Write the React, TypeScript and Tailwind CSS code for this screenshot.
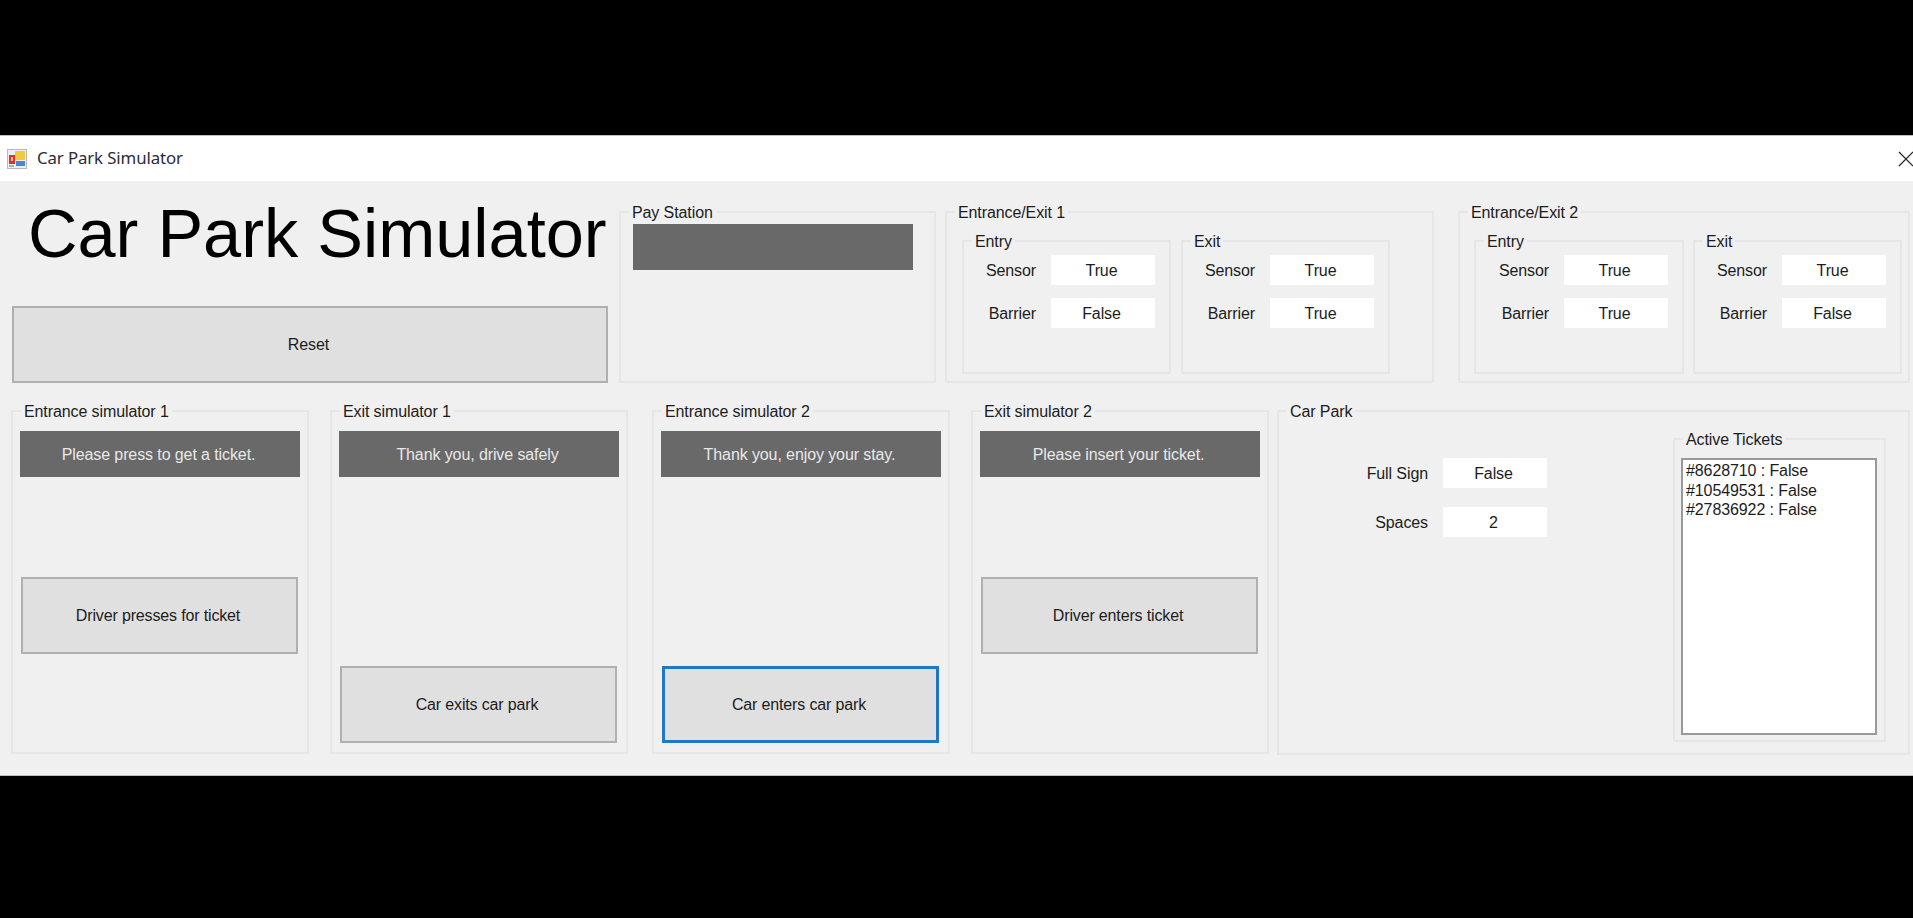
import { ReactNode } from "react";

function Group({
  label,
  className,
  children,
}: {
  label: string;
  className: string;
  children?: ReactNode;
}) {
  return (
    <div className={`border-2 border-[#e6e6e6] ${className}`}>
      <div className="-mt-[10px] ml-[8px] h-[20px] w-fit bg-[#f0f0f0] px-[3px] leading-[20px]">
        {label}
      </div>
      {children}
    </div>
  );
}

function Field({ label, value }: { label: string; value: string }) {
  return (
    <div className="flex items-center justify-end gap-[15px]">
      <span className="pt-[2px]">{label}</span>
      <span className="flex h-[30px] w-[104px] items-center justify-center bg-white pt-[2px] pr-[3px]">
        {value}
      </span>
    </div>
  );
}

function SensorBox({
  label,
  sensor,
  barrier,
  className,
}: {
  label: string;
  sensor: string;
  barrier: string;
  className: string;
}) {
  return (
    <Group label={label} className={`h-[134px] ${className}`}>
      <div className="flex flex-col gap-[13px] pt-[3px] pr-[14px]">
        <Field label="Sensor" value={sensor} />
        <Field label="Barrier" value={barrier} />
      </div>
    </Group>
  );
}

function EntranceExit({
  label,
  values,
  className,
  bodyClass,
  entryClass,
}: {
  label: string;
  values: string[];
  className: string;
  bodyClass: string;
  entryClass: string;
}) {
  return (
    <Group label={label} className={`h-[172px] ${className}`}>
      <div className={`flex pt-[17px] ${bodyClass}`}>
        <SensorBox label="Entry" sensor={values[0]} barrier={values[1]} className={entryClass} />
        <SensorBox label="Exit" sensor={values[2]} barrier={values[3]} className="w-[209px]" />
      </div>
    </Group>
  );
}

function SimButton({ text, className }: { text: string; className: string }) {
  return (
    <button className={`flex h-[77px] w-[277px] items-center justify-center bg-[#e0e0e0] pr-[3px] tracking-[-0.15px] ${className}`}>
      {text}
    </button>
  );
}

function Simulator({
  label,
  message,
  button,
  buttonClass,
  className,
}: {
  label: string;
  message: string;
  button: string;
  buttonClass: string;
  className: string;
}) {
  return (
    <Group label={label} className={`h-[344px] w-[298px] ${className}`}>
      <div className="flex flex-col pt-[9px] pl-[7px]">
        <div className="flex h-[46px] w-[280px] items-center justify-center bg-[#696969] pt-[2px] pr-[3px] text-[#e8e8e8]">
          {message}
        </div>
        <SimButton text={button} className={buttonClass} />
      </div>
    </Group>
  );
}

function WinFormsIcon() {
  return (
    <svg width="20" height="20" viewBox="0 0 20 20">
      <rect x="0.5" y="0.5" width="19" height="19" fill="#eceef2" stroke="#b9b9b9" />
      <rect x="8" y="2" width="10" height="9" fill="#f3c83c" />
      <rect x="2" y="6" width="6" height="9" fill="#d8322c" />
      <rect x="4" y="8" width="2" height="4" fill="#f5b5a8" />
      <rect x="9" y="12" width="9" height="5" fill="#4a86d8" />
      <rect x="2" y="16" width="5" height="2" fill="#9fb4d0" />
    </svg>
  );
}

export default function App() {
  return (
    <div className="h-[918px] overflow-hidden bg-black pt-[135px] font-['Liberation_Sans',sans-serif] text-[16px] tracking-[-0.1px] text-[#1c1c1c]">
      <div className="h-[641px] border-y border-[#9cc7e4]">
        <div className="flex h-[45px] items-center bg-white">
          <div className="ml-[7px]">
            <WinFormsIcon />
          </div>
          <span className="mb-[2px] ml-[10px] font-['Noto_Sans',sans-serif] text-[16.8px] text-[#2b2b35]">Car Park Simulator</span>
          <svg className="ml-auto" width="15" height="16" viewBox="0 0 15 16" stroke="#222" strokeWidth="1.2">
            <path d="M1 1 L15 15 M15 1 L1 15" />
          </svg>
        </div>

        <div className="h-[594px] bg-[#f0f0f0]">
          <div className="flex items-end pl-[12px]">
            <div className="flex w-[596px] flex-col">
              <h1 className="mt-[13px] pl-[16px] text-[68.5px] leading-[80px] font-normal tracking-normal text-black">
                Car Park Simulator
              </h1>
              <button className="mt-[32px] flex h-[77px] items-center justify-center border-2 border-[#b0b0b0] bg-[#e0e0e0] pr-[3px]">
                Reset
              </button>
            </div>
            <Group label="Pay Station" className="ml-[11px] h-[172px] w-[317px]">
              <div className="mt-px ml-[12px] h-[46px] w-[280px] bg-[#696969]" />
            </Group>
            <EntranceExit
              label="Entrance/Exit 1"
              values={["True", "False", "True", "True"]}
              className="ml-[9px] w-[489px]"
              bodyClass="gap-[10px] pl-[15px]"
              entryClass="w-[209px]"
            />
            <EntranceExit
              label="Entrance/Exit 2"
              values={["True", "True", "True", "False"]}
              className="ml-[24px] w-[452px]"
              bodyClass="gap-[9px] pl-[14px]"
              entryClass="w-[210px]"
            />
          </div>

          <div className="mt-[27px] flex pl-[11px]">
            <Simulator
              label="Entrance simulator 1"
              message="Please press to get a ticket."
              button="Driver presses for ticket"
              buttonClass="mt-[100px] ml-px border-2 border-[#b0b0b0]"
              className=""
            />
            <Simulator
              label="Exit simulator 1"
              message="Thank you, drive safely"
              button="Car exits car park"
              buttonClass="mt-[189px] ml-px border-2 border-[#b0b0b0]"
              className="ml-[21px]"
            />
            <Simulator
              label="Entrance simulator 2"
              message="Thank you, enjoy your stay."
              button="Car enters car park"
              buttonClass="mt-[189px] ml-px border-[3px] border-[#1f78c4]"
              className="ml-[24px]"
            />
            <Simulator
              label="Exit simulator 2"
              message="Please insert your ticket."
              button="Driver enters ticket"
              buttonClass="mt-[100px] ml-px border-2 border-[#b0b0b0]"
              className="ml-[21px]"
            />

            <Group label="Car Park" className="ml-[8px] h-[345px] w-[633px]">
              <div className="flex">
                <div className="flex w-[268px] flex-col gap-[19px] pt-[36px]">
                  <Field label="Full Sign" value="False" />
                  <Field label="Spaces" value="2" />
                </div>
                <Group label="Active Tickets" className="mt-[16px] ml-[126px] h-[304px] w-[213px]">
                  <div className="mt-[8px] ml-[6px] h-[277px] w-[196px] border-2 border-[#999999] bg-white px-[3px] py-px leading-[19.5px]">
                    <div>#8628710 : False</div>
                    <div>#10549531 : False</div>
                    <div>#27836922 : False</div>
                  </div>
                </Group>
              </div>
            </Group>
          </div>
        </div>
      </div>
    </div>
  );
}
